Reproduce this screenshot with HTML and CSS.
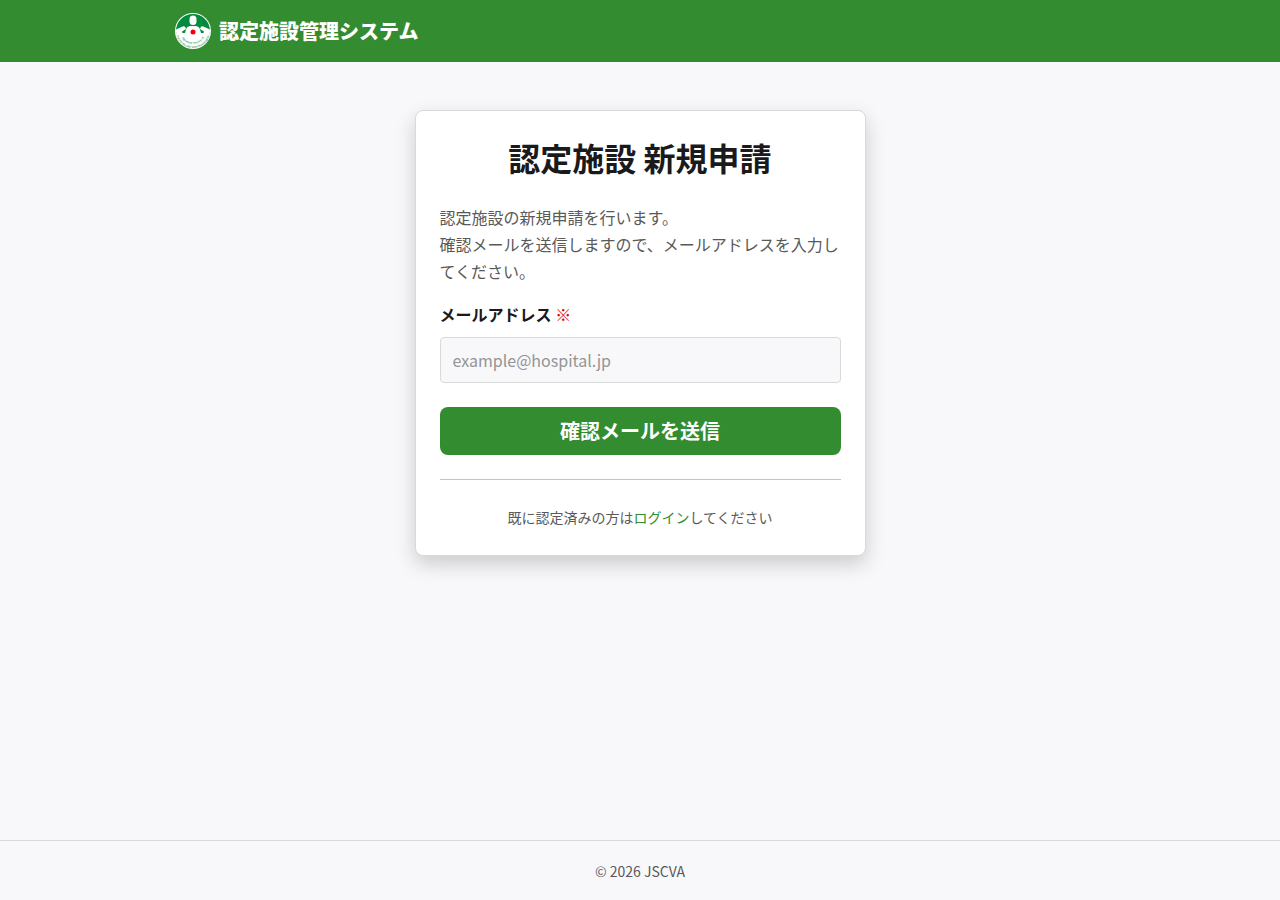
FILE: index.html
```html
<!DOCTYPE html>
<html lang="ja">
<head>
  <meta charset="UTF-8">
  <meta name="viewport" content="width=device-width, initial-scale=1">
  <title>認定施設管理システム</title>
  <link rel="stylesheet" href="styles.css">
</head>
<body>

  <header class="site-header">
    <div class="header-inner">
      <svg class="logo" viewBox="0 0 72 72" aria-hidden="true">
        <defs>
          <path id="arc-outer" d="M2 36A34 34 0 0 0 70 36"/>
          <path id="arc-inner" d="M10 36A26 26 0 0 0 62 36"/>
          <clipPath id="disc"><circle cx="36" cy="36" r="34"/></clipPath>
        </defs>
        <circle cx="36" cy="36" r="36" fill="#fff"/>
        <g clip-path="url(#disc)">
          <path d="M0 0H72V42H0Z" fill="#008c3c"/>
          <path d="M0 34L13 28Q19 25 21 29L22 32L14 37L15 40H20L22 33Q23 27 30 26H42Q49 27 50 33L52 40H57L58 37L50 32L51 29Q53 25 59 28L72 34V72H0Z" fill="#fff"/>
          <rect x="29" y="5" width="14" height="19" rx="7" fill="#fff"/>
        </g>
        <circle cx="36" cy="38" r="5" fill="#f00010"/>
        <text class="logo-text"><textPath href="#arc-inner" startOffset="50%">Japanese Society of</textPath></text>
        <text class="logo-text"><textPath href="#arc-outer" startOffset="50%">Cardiovascular Anesthesiologists</textPath></text>
      </svg>
      <span class="site-title">認定施設管理システム</span>
    </div>
  </header>

  <main class="main">
    <div class="card">
      <h1>認定施設 新規申請</h1>
      <p class="lead">認定施設の新規申請を行います。<br>確認メールを送信しますので、メールアドレスを入力してください。</p>
      <form>
        <label for="email">メールアドレス <span class="required">※</span></label>
        <input type="email" id="email" name="email" placeholder="example@hospital.jp" required>
        <button type="submit">確認メールを送信</button>
      </form>
      <hr>
      <p class="login">既に認定済みの方は<a href="#">ログイン</a>してください</p>
    </div>
  </main>

  <footer class="site-footer">© 2026 JSCVA</footer>

</body>
</html>
```
FILE: styles.css
```css
* {
  box-sizing: border-box;
}
body {
  display: flex;
  flex-direction: column;
  min-height: 100vh;
  margin: 0;
  font-family: 'Noto Sans CJK JP', sans-serif;
  font-size: 16px;
  line-height: 27px;
  color: #1a1a1c;
  background: #f8f8fb;
}
.site-header {
  padding: 13px 16px;
  background: #338c30;
}
.header-inner {
  display: flex;
  align-items: center;
  gap: 8px;
  max-width: 930px;
  margin: 0 auto;
}
.logo {
  width: 36px;
  height: 36px;
}
.logo-text {
  font-family: 'Liberation Sans', sans-serif;
  font-size: 6px;
  fill: #008c3c;
  text-anchor: middle;
}
.site-title {
  padding-bottom: 2px;
  font-size: 20px;
  font-weight: 900;
  color: #fff;
}
.main {
  flex: 1;
  padding: 48px 16px;
}
.card {
  max-width: 451px;
  margin: 0 auto;
  padding: 24px 24px 26px;
  background: #fff;
  border: 1px solid #d9d9d9;
  border-radius: 8px;
  box-shadow: 0 8px 20px rgba(0, 0, 0, 0.18);
}
h1 {
  margin: 0 0 25px;
  font-size: 32px;
  line-height: 44px;
  font-weight: 700;
  text-align: center;
}
.lead {
  margin: 0 0 16px;
  color: #595959;
}
label {
  display: block;
  margin-bottom: 9px;
  font-weight: 700;
}
.required {
  font-weight: 400;
  color: #e60000;
}
input {
  display: block;
  width: 100%;
  height: 46px;
  margin-bottom: 24px;
  padding: 0 12px;
  font: inherit;
  color: inherit;
  background: #f8f8fb;
  border: 1px solid #d9d9d9;
  border-radius: 4px;
}
input::placeholder {
  color: #949494;
}
button {
  display: block;
  width: 100%;
  height: 48px;
  padding: 0 0 2px;
  font-family: inherit;
  font-size: 20px;
  font-weight: 700;
  color: #fff;
  background: #338c30;
  border: none;
  border-radius: 8px;
  cursor: pointer;
}
hr {
  margin: 24px 0 25px;
  border: none;
  border-top: 1px solid #c4c4c4;
}
.login {
  margin: 0;
  font-size: 14px;
  line-height: 24px;
  text-align: center;
  color: #595959;
}
.login a {
  color: #338c30;
  text-decoration: none;
}
.site-footer {
  padding: 18px 16px 17px;
  font-size: 14px;
  line-height: 24px;
  text-align: center;
  color: #595959;
  border-top: 1px solid #d9d9d9;
}
```
